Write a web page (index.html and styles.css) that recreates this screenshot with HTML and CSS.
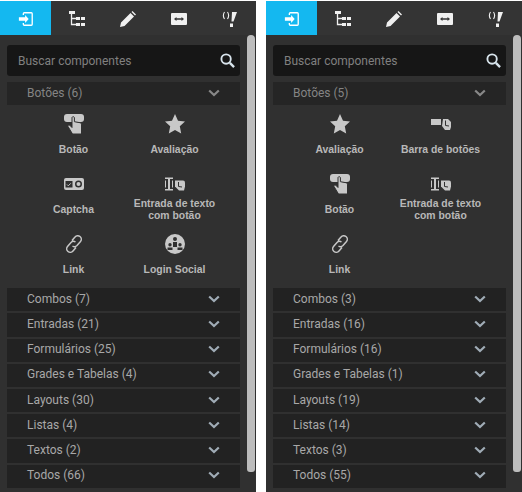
FILE: index.html
```html
<!DOCTYPE html>
<html lang="pt-BR">
<head>
    <meta charset="UTF-8">
    <meta name="viewport" content="width=device-width, initial-scale=1.0">
    <title>Componentes</title>
    <link rel="stylesheet" href="styles.css">
</head>
<body>
    <!-- Ícones reutilizados nos dois painéis -->
    <svg class="sprites" width="0" height="0">
        <symbol id="i-enter" viewBox="-1 -1 18 18"><path d="M5 3.500V2a1 1 0 0 1 1-1h8a1 1 0 0 1 1 1v12a1 1 0 0 1-1 1H6a1 1 0 0 1-1-1v-1.500" fill="none" stroke="currentColor" stroke-width="1.500"/><path d="M0 6h7V3.500L11 8l-4 4.500V10H0z" fill="currentColor"/></symbol>
        <symbol id="i-tree" viewBox="0 0 16 16"><path d="M0 0h6v3H0zM7 6h4v3H7zM12 6h4v3h-4zM7 12h4v3H7zM12 12h4v3h-4z" fill="currentColor"/><path d="M2.500 3v10.500H7M2.500 7.500H7" fill="none" stroke="currentColor" stroke-width="1.300"/></symbol>
        <symbol id="i-pencil" viewBox="0 0 16 16"><path d="M0 16l1-4.500L10.500 2l3.500 3.500L4.500 15zM11.500 1l1-1L16 3.500l-1 1z" fill="currentColor"/></symbol>
        <symbol id="i-resize" viewBox="0 0 16 12"><path fill-rule="evenodd" d="M1 0h14a1 1 0 0 1 1 1v10a1 1 0 0 1-1 1H1a1 1 0 0 1-1-1V1a1 1 0 0 1 1-1zM3 6l2.500 2V6.700h5V8L13 6l-2.500-2v1.300h-5V4z" fill="currentColor"/></symbol>
        <symbol id="i-bang" viewBox="0 0 16 16"><path d="M2.500 1C1.200 3 1.200 6 2.500 8M5.500 1c1.300 2 1.300 5 0 7" fill="none" stroke="currentColor" stroke-width="1.100"/><path d="M10 1h5l-3.500 9.500H9.500zM8 12.500h3V16H8z" fill="currentColor"/></symbol>
        <symbol id="i-search" viewBox="0 0 16 16"><circle cx="6.500" cy="6.500" r="5" fill="none" stroke="currentColor" stroke-width="2"/><path d="M10.500 10.500L15 15" stroke="currentColor" stroke-width="2.500"/></symbol>
        <symbol id="i-chevron" viewBox="0 0 12 8"><path d="M1.200 1.500L6 6l4.800-4.500" fill="none" stroke="currentColor" stroke-width="2.200"/></symbol>
        <symbol id="i-botao" viewBox="0 0 20 20"><path d="M3 0h14a3 3 0 0 1 3 3v2a3 3 0 0 1-3 3H3a3 3 0 0 1-3-3V3a3 3 0 0 1 3-3z" fill="currentColor"/><path d="M8 3.500a1.300 1.300 0 0 1 2.400 0v4.200l5.600 1c1.300.3 1.500 1 1.500 2.300V20H8.500L4 12.500c-.5-1 .8-2.200 1.800-1.200L8 13.500z" fill="currentColor" stroke="#303030" stroke-width="1"/></symbol>
        <symbol id="i-star" viewBox="0 0 20 20"><path d="M10 0l3 6.700 7 .8-5.200 4.800 1.400 7.200L10 16l-6.200 3.500 1.400-7.200L0 7.500l7-.8z" fill="currentColor"/></symbol>
        <symbol id="i-captcha" viewBox="0 0 20 12"><path fill-rule="evenodd" d="M2 0h16a2 2 0 0 1 2 2v8a2 2 0 0 1-2 2H2a2 2 0 0 1-2-2V2a2 2 0 0 1 2-2zM1.500 3v6.500h7V3zM14.500 2.500a3.500 3.500 0 1 0 0 7 3.500 3.500 0 0 0 0-7z" fill="currentColor"/><path d="M3 6.500l1.300 1.300 2.500-2.500" fill="none" stroke="currentColor"/><circle cx="14.500" cy="6" r="2" fill="currentColor"/></symbol>
        <symbol id="i-entrada" viewBox="0 0 20 13"><path d="M0 0h8v1.500H5v10h3V13H0v-1.500h3v-10H0z" fill="currentColor"/><path d="M.5 3v7M7.500 3v7" stroke="currentColor"/><path d="M10 3h8a2 2 0 0 1 2 2v4l-1 4h-5l-4-4z" fill="currentColor"/><path d="M13.500 4.500v4.500l3.500.5" fill="none" stroke="#303030"/></symbol>
        <symbol id="i-link" viewBox="0 0 20 20"><path d="M8 6.500l3-3.500a3.500 3.500 0 0 1 5.500 4.500l-3.500 4a3.500 3.500 0 0 1-4.500.5M12 13.500l-3 3.500a3.500 3.500 0 0 1-5.500-4.500l3.500-4a3.500 3.500 0 0 1 4.500-.5" fill="none" stroke="currentColor" stroke-width="1.500"/></symbol>
        <symbol id="i-social" viewBox="0 0 20 20"><path fill-rule="evenodd" d="M10 0a10 10 0 1 1 0 20 10 10 0 0 1 0-20zM10 3a2 2 0 1 0 0 4 2 2 0 0 0 0-4zM5 9a1.700 1.700 0 1 0 0 3.400A1.700 1.700 0 0 0 5 9zM15 9a1.700 1.700 0 1 0 0 3.400A1.700 1.700 0 0 0 15 9zM8 8v5h4V8zM2.500 13.500V16h5v-2.500zM12.500 13.500V16h5v-2.500z" fill="currentColor"/></symbol>
        <symbol id="i-barra" viewBox="0 0 20 12"><path d="M0 1h10v6H0z" fill="currentColor"/><path d="M12 1h5l3 3v5l-1 3h-5l-3-4z" fill="currentColor"/><path d="M14.500 2.500v5l3.500.5" fill="none" stroke="#303030"/></symbol>
    </svg>

    <div class="paineis">
        <!-- Painel esquerdo -->
        <section class="painel">
            <nav class="abas">
                <a class="aba ativa"><svg class="ico-aba"><use href="#i-enter"/></svg></a>
                <a class="aba"><svg class="ico-aba"><use href="#i-tree"/></svg></a>
                <a class="aba"><svg class="ico-aba"><use href="#i-pencil"/></svg></a>
                <a class="aba"><svg class="ico-aba"><use href="#i-resize"/></svg></a>
                <a class="aba"><svg class="ico-aba"><use href="#i-bang"/></svg></a>
            </nav>
            <div class="corpo">
                <div class="conteudo">
                    <div class="busca">
                        <span>Buscar componentes</span>
                        <svg class="ico-busca"><use href="#i-search"/></svg>
                    </div>
                    <div class="grupo aberto">Botões (6)<svg class="seta"><use href="#i-chevron"/></svg></div>
                    <div class="itens">
                        <div class="item"><svg class="ico-item"><use href="#i-botao"/></svg><span>Botão</span></div>
                        <div class="item"><svg class="ico-item"><use href="#i-star"/></svg><span>Avaliação</span></div>
                        <div class="item"><svg class="ico-item"><use href="#i-captcha"/></svg><span>Captcha</span></div>
                        <div class="item"><svg class="ico-item"><use href="#i-entrada"/></svg><span>Entrada de texto com botão</span></div>
                        <div class="item"><svg class="ico-item"><use href="#i-link"/></svg><span>Link</span></div>
                        <div class="item"><svg class="ico-item"><use href="#i-social"/></svg><span>Login Social</span></div>
                    </div>
                    <div class="grupo">Combos (7)<svg class="seta"><use href="#i-chevron"/></svg></div>
                    <div class="grupo">Entradas (21)<svg class="seta"><use href="#i-chevron"/></svg></div>
                    <div class="grupo">Formulários (25)<svg class="seta"><use href="#i-chevron"/></svg></div>
                    <div class="grupo">Grades e Tabelas (4)<svg class="seta"><use href="#i-chevron"/></svg></div>
                    <div class="grupo">Layouts (30)<svg class="seta"><use href="#i-chevron"/></svg></div>
                    <div class="grupo">Listas (4)<svg class="seta"><use href="#i-chevron"/></svg></div>
                    <div class="grupo">Textos (2)<svg class="seta"><use href="#i-chevron"/></svg></div>
                    <div class="grupo">Todos (66)<svg class="seta"><use href="#i-chevron"/></svg></div>
                </div>
                <div class="rolagem"><div class="polegar"></div></div>
            </div>
        </section>

        <!-- Painel direito -->
        <section class="painel">
            <nav class="abas">
                <a class="aba ativa"><svg class="ico-aba"><use href="#i-enter"/></svg></a>
                <a class="aba"><svg class="ico-aba"><use href="#i-tree"/></svg></a>
                <a class="aba"><svg class="ico-aba"><use href="#i-pencil"/></svg></a>
                <a class="aba"><svg class="ico-aba"><use href="#i-resize"/></svg></a>
                <a class="aba"><svg class="ico-aba"><use href="#i-bang"/></svg></a>
            </nav>
            <div class="corpo">
                <div class="conteudo">
                    <div class="busca">
                        <span>Buscar componentes</span>
                        <svg class="ico-busca"><use href="#i-search"/></svg>
                    </div>
                    <div class="grupo aberto">Botões (5)<svg class="seta"><use href="#i-chevron"/></svg></div>
                    <div class="itens">
                        <div class="item"><svg class="ico-item"><use href="#i-star"/></svg><span>Avaliação</span></div>
                        <div class="item"><svg class="ico-item"><use href="#i-barra"/></svg><span>Barra de botões</span></div>
                        <div class="item"><svg class="ico-item"><use href="#i-botao"/></svg><span>Botão</span></div>
                        <div class="item"><svg class="ico-item"><use href="#i-entrada"/></svg><span>Entrada de texto com botão</span></div>
                        <div class="item"><svg class="ico-item"><use href="#i-link"/></svg><span>Link</span></div>
                    </div>
                    <div class="grupo">Combos (3)<svg class="seta"><use href="#i-chevron"/></svg></div>
                    <div class="grupo">Entradas (16)<svg class="seta"><use href="#i-chevron"/></svg></div>
                    <div class="grupo">Formulários (16)<svg class="seta"><use href="#i-chevron"/></svg></div>
                    <div class="grupo">Grades e Tabelas (1)<svg class="seta"><use href="#i-chevron"/></svg></div>
                    <div class="grupo">Layouts (19)<svg class="seta"><use href="#i-chevron"/></svg></div>
                    <div class="grupo">Listas (14)<svg class="seta"><use href="#i-chevron"/></svg></div>
                    <div class="grupo">Textos (3)<svg class="seta"><use href="#i-chevron"/></svg></div>
                    <div class="grupo">Todos (55)<svg class="seta"><use href="#i-chevron"/></svg></div>
                </div>
                <div class="rolagem"><div class="polegar"></div></div>
            </div>
        </section>
    </div>
</body>
</html>
```

FILE: styles.css
```css
:root {
    --fundo: #303030;
    --escuro: #222222;
    --azul: #14b8f0;
    --texto: #a8a8a8;
}

html, body {
    margin: 0;
    height: 100%;
    background-color: #ffffff;
    overflow: hidden;
}

.sprites {
    display: block;
}

.paineis {
    display: flex;
    gap: 10px;
    padding-top: 1px;
    height: 491px;
}

.painel {
    width: 256px;
    flex: none;
    background-color: var(--fundo);
    display: flex;
    flex-direction: column;
}

.abas {
    display: flex;
    height: 34px;
    flex: none;
    background-color: #343434;
}

.aba {
    width: 51px;
    display: flex;
    align-items: center;
    justify-content: center;
    color: #f0f0f0;
}

.aba.ativa {
    background-color: var(--azul);
    color: #ffffff;
}

.ico-aba {
    width: 16px;
    height: 16px;
    margin-top: 2px;
}

.corpo {
    flex: 1;
    display: flex;
    min-height: 0;
}

.conteudo {
    width: 233px;
    padding: 10px 0 0 7px;
    flex: none;
}

.busca {
    height: 31px;
    background-color: #161616;
    border-radius: 3px;
    display: flex;
    align-items: center;
    justify-content: space-between;
    padding: 0 5px 0 11px;
    margin-bottom: 6px;
    font-family: "Roboto", sans-serif;
    font-size: 12px;
    color: #808080;
}

.ico-busca {
    width: 15px;
    height: 15px;
    color: #d8e4ec;
}

.grupo {
    height: 23.200px;
    margin-bottom: 2px;
    background-color: var(--escuro);
    display: flex;
    align-items: center;
    justify-content: space-between;
    box-sizing: border-box;
    padding: 0 20px 2px 20px;
    font-family: "Roboto", sans-serif;
    font-size: 12px;
    color: var(--texto);
}

.grupo.aberto {
    color: #848484;
    background-color: #252525;
    margin-bottom: 0;
}

.seta {
    width: 12px;
    height: 8px;
    color: #a0acb6;
}

.grupo.aberto .seta {
    color: #888888;
}

.itens {
    display: grid;
    grid-template-columns: 101px 101px;
    grid-auto-rows: 60px;
    height: 183px;
    padding: 9px 0 0 16px;
    box-sizing: border-box;
}

.item {
    display: flex;
    flex-direction: column;
    align-items: center;
    font-family: "Liberation Sans", sans-serif;
    font-size: 10.400px;
    font-weight: bold;
    line-height: 12.500px;
    color: #b8b8b8;
    text-align: center;
}

.item span {
    width: 96px;
    height: 26px;
    margin-top: 3px;
    display: flex;
    justify-content: center;
    align-items: center;
}

.ico-item {
    width: 20px;
    height: 20px;
    color: #c8c8c8;
    flex: none;
}

.rolagem {
    width: 8px;
    margin-left: 7px;
    flex: none;
}

.polegar {
    width: 8px;
    height: 437px;
    background-color: #bdbdbd;
    border-radius: 4px 4px 3px 3px;
}
```
